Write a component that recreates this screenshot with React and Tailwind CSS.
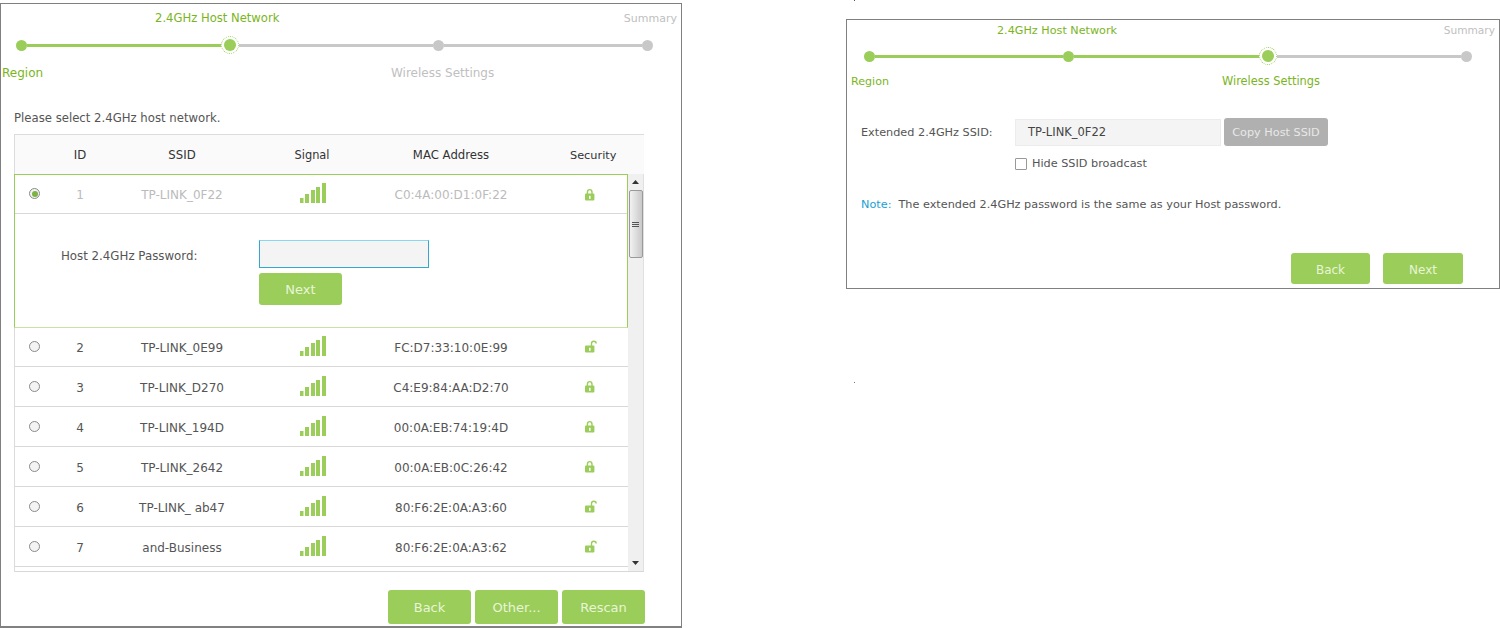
import React from 'react';

const GREEN = '#9acd5a';

const NETWORKS = [
  { id: 2, ssid: 'TP-LINK_0E99', mac: 'FC:D7:33:10:0E:99', open: true },
  { id: 3, ssid: 'TP-LINK_D270', mac: 'C4:E9:84:AA:D2:70', open: false },
  { id: 4, ssid: 'TP-LINK_194D', mac: '00:0A:EB:74:19:4D', open: false },
  { id: 5, ssid: 'TP-LINK_2642', mac: '00:0A:EB:0C:26:42', open: false },
  { id: 6, ssid: 'TP-LINK_ ab47', mac: '80:F6:2E:0A:A3:60', open: true },
  { id: 7, ssid: 'and-Business', mac: '80:F6:2E:0A:A3:62', open: true },
];

const COLS = 'grid grid-cols-[40px_50px_154px_106px_172px_91px] items-center';
const CELL = 'text-center pt-[2px]';

const SignalBars = () => (
  <svg width="27" height="20" viewBox="0 0 27 20" className="block">
    <rect x="0" y="15" width="3.5" height="5" fill={GREEN} />
    <rect x="5" y="11" width="4" height="9" fill={GREEN} />
    <rect x="11" y="7" width="4" height="13" fill={GREEN} />
    <rect x="16" y="4" width="4" height="16" fill={GREEN} />
    <rect x="22" y="0" width="4" height="20" fill={GREEN} />
  </svg>
);

const Lock = ({ open }) => (
  <svg width="13" height="13" viewBox="0 0 13 13" className="block">
    {open ? (
      <path d="M6.5 6V3.6C6.5 2.2 7.4 1.2 8.8 1.2S11.2 2.2 11.2 3.6" fill="none" stroke={GREEN} strokeWidth="1.4" />
    ) : (
      <path d="M2.4 6V4.2C2.4 2.6 3.2 1.6 4.7 1.6S7 2.6 7 4.2V6" fill="none" stroke={GREEN} strokeWidth="1.4" />
    )}
    <rect x={0} y="5.5" width="9.4" height="7" rx="1" fill={GREEN} />
    <rect x="4" y="7.8" width="1.6" height="3" fill="#fff" />
  </svg>
);

const Radio = ({ checked }) => (
  <span className="flex w-[11px] h-[11px] mb-[1px] mr-[1px] items-center justify-center rounded-full border border-[#8a8a8a] bg-[#f4f4f4]">
    {checked && <span className="block w-[6px] h-[6px] rounded-full bg-[#7cb342]" />}
  </span>
);

const Btn = ({ className, children }) => (
  <button className={`flex items-center justify-center pt-[2px] rounded-[3px] bg-[#9acd5a] text-[#e9f5d8] ${className}`}>
    {children}
  </button>
);

const Dot = ({ state }) => {
  if (state === 'active') {
    return (
      <span className="flex w-[18px] h-[18px] shrink-0 items-center justify-center rounded-full border border-dotted border-[#9acd5a]">
        <span className="block w-[12px] h-[12px] rounded-full bg-[#9acd5a]" />
      </span>
    );
  }
  return <span className={`block w-[11px] h-[11px] shrink-0 rounded-full ${state === 'done' ? 'bg-[#9acd5a]' : 'bg-[#c8c8c8]'}`} />;
};

const Line = ({ done, className }) => <span className={`block h-[3px] ${done ? 'bg-[#9acd5a]' : 'bg-[#c8c8c8]'} ${className}`} />;

const ScrollArrow = ({ down }) => (
  <svg width="7" height="4" viewBox="0 0 7 4" className="block">
    <polygon points={down ? '0,0 7,0 3.5,4' : '3.5,0 7,4 0,4'} fill="#333" />
  </svg>
);

const Scrollbar = () => (
  <div className="flex flex-col items-center w-[16px] h-full bg-[#f0f0f0] border-r border-[#e0e0e0]">
    <div className="flex h-[16px] shrink-0 items-center justify-center"><ScrollArrow /></div>
    <div className="flex flex-col gap-[1px] items-center justify-center w-[14px] h-[68px] rounded-[2px] border border-[#9a9a9a] bg-gradient-to-r from-[#f2f2f2] to-[#c9c9c9]">
      <span className="block w-[7px] h-[1px] bg-[#555]" />
      <span className="block w-[7px] h-[1px] bg-[#555]" />
      <span className="block w-[7px] h-[1px] bg-[#555]" />
    </div>
    <div className="flex-1" />
    <div className="flex h-[16px] shrink-0 items-center justify-center"><ScrollArrow down /></div>
  </div>
);

const NetworkRow = ({ n }) => (
  <div className={`${COLS} h-[40px] border-b border-[#d8d8d8] text-[#555]`}>
    <div className="flex justify-center"><Radio /></div>
    <div className={CELL}>{n.id}</div>
    <div className={CELL}>{n.ssid}</div>
    <div className="flex justify-center pl-[2px] mb-[2px]"><SignalBars /></div>
    <div className={CELL}>{n.mac}</div>
    <div className="flex pl-[48px]"><Lock open={n.open} /></div>
  </div>
);

const HostNetworkPanel = () => (
  <div className="flex flex-col w-[682px] h-[625px] mt-[3px] shrink-0 border border-[#808080] border-b-2">
    {/* stepper */}
    <div className="flex justify-between h-[24px] items-center pl-[154px] pr-[4px] pt-[6px]">
      <span className="text-[11.6px] text-[#7ab51d]">2.4GHz Host Network</span>
      <span className="text-[11px] text-[#c0c0c0]">Summary</span>
    </div>
    <div className="flex items-center h-[34px] pl-[15px] pr-[28px]">
      <Dot state="done" />
      <Line done className="w-[194px]" />
      <Dot state="active" />
      <Line className="w-[194px]" />
      <Dot />
      <Line className="flex-1" />
      <Dot />
    </div>
    <div className="flex h-[20px] items-center pl-[1px] pt-[2px] text-[12px]">
      <span className="w-[389px] text-[#7ab51d]">Region</span>
      <span className="text-[#c0c0c0]">Wireless Settings</span>
    </div>

    <p className="mt-[28px] pl-[13px] text-[11.7px] leading-[16px] text-[#555]">Please select 2.4GHz host network.</p>

    {/* network table */}
    <div className="flex flex-col w-[630px] h-[438px] mt-[8px] ml-[13px] border-t border-l border-[#dcdcdc] text-[12px]">
      <div className={`${COLS} h-[39px] shrink-0 bg-[#fafafa] text-[#333] text-[11.7px]`}>
        <div />
        <div className="text-center pt-[3px]">ID</div>
        <div className="text-center pt-[3px]">SSID</div>
        <div className="text-center pt-[3px] text-[11.4px]">Signal</div>
        <div className="text-center pt-[3px]">MAC Address</div>
        <div className="pl-[33px] pt-[3px] text-[11.3px]">Security</div>
      </div>
      <div className="flex flex-1 min-h-0">
        <div className="flex-1 min-w-0">
          <div className="-ml-[1px] border border-[#9acd5a] border-b-[#c6e3a0]">
            <div className={`${COLS} h-[39px] border-b border-[#d8d8d8] text-[#bbb]`}>
              <div className="flex justify-center"><Radio checked /></div>
              <div className={CELL}>1</div>
              <div className={CELL}>TP-LINK_0F22</div>
              <div className="flex justify-center pl-[2px] mb-[2px]"><SignalBars /></div>
              <div className={CELL}>C0:4A:00:D1:0F:22</div>
              <div className="flex pl-[48px]"><Lock /></div>
            </div>
            <div className="flex h-[113px] pl-[46px] pt-[26px]">
              <span className="w-[198px] h-[28px] flex items-center pt-[6px] text-[11.8px] text-[#555]">Host 2.4GHz Password:</span>
              <div className="flex flex-col gap-[5px]">
                <input className="w-[170px] h-[28px] bg-[#f4f4f4] border border-[#35a7cf] border-t-[#85d8f0]" />
                <Btn className="w-[83px] h-[32px] text-[13px]">Next</Btn>
              </div>
            </div>
          </div>
          <div className="-mt-[1px]">
            {NETWORKS.map(n => <NetworkRow key={n.id} n={n} />)}
          </div>
        </div>
        <Scrollbar />
      </div>
      <div className="shrink-0 border-b border-[#d8d8d8]" />
    </div>

    <div className="flex justify-end gap-[4px] mt-[18px] pr-[36px]">
      <Btn className="w-[83px] h-[34px] text-[13px]">Back</Btn>
      <Btn className="w-[83px] h-[34px] text-[13px]">Other...</Btn>
      <Btn className="w-[83px] h-[34px] text-[13px]">Rescan</Btn>
    </div>
  </div>
);

const ExtendedPanel = () => (
  <div className="flex flex-col w-[654px] h-[270px] mt-[19px] ml-[164px] shrink-0 border border-[#808080]">
    <div className="flex justify-between h-[20px] items-center pl-[150px] pr-[4px] pt-[2px]">
      <span className="text-[11.2px] text-[#7ab51d]">2.4GHz Host Network</span>
      <span className="text-[10.6px] text-[#c0c0c0]">Summary</span>
    </div>
    <div className="flex items-center h-[32px] pl-[17px] pr-[27px]">
      <Dot state="done" />
      <Line done className="w-[188px]" />
      <Dot state="done" />
      <Line done className="w-[185px]" />
      <Dot state="active" />
      <Line className="flex-1" />
      <Dot />
    </div>
    <div className="flex h-[18px] items-center pl-[4px] pt-[2px]">
      <span className="w-[371px] text-[11.1px] text-[#7ab51d]">Region</span>
      <span className="text-[11.4px] text-[#7ab51d]">Wireless Settings</span>
    </div>

    <div className="flex items-center h-[28px] mt-[28px] pl-[14px] text-[11.25px] text-[#555]">
      <span className="w-[154px] pt-[2px]">Extended 2.4GHz SSID:</span>
      <div className="flex items-center w-[206px] h-[27px] mt-[1px] pl-[12px] pt-[1px] bg-[#f4f4f4] border border-[#ececec] text-[11.5px] text-[#444]">TP-LINK_0F22</div>
      <button className="flex items-center justify-center w-[104px] h-[28px] ml-[3px] pt-[2px] rounded-[3px] bg-[#b0b0b0] text-[#e8e8e8]">Copy Host SSID</button>
    </div>
    <label className="flex items-center gap-[5px] h-[16px] mt-[10px] pl-[168px] text-[11.25px] text-[#555]">
      <span className="block w-[12px] h-[12px] rounded-[1px] border border-[#999] bg-white" />
      Hide SSID broadcast
    </label>
    <p className="mt-[25px] pl-[14px] text-[11.25px] leading-[16px] text-[#555]">
      <span className="text-[#1a9fd4] mr-[7px]">Note:</span>
      The extended 2.4GHz password is the same as your Host password.
    </p>
    <div className="flex justify-end gap-[13px] mt-[40px] pr-[36px]">
      <Btn className="w-[79px] h-[31px] text-[12px]">Back</Btn>
      <Btn className="w-[80px] h-[31px] text-[12px]">Next</Btn>
    </div>
  </div>
);

export default function App() {
  return (
    <div className="relative flex items-start w-[1500px] h-[628px] overflow-hidden bg-white font-['DejaVu_Sans',sans-serif]">
      <HostNetworkPanel />
      <ExtendedPanel />
      {/* stray scan specks */}
      <span className="absolute left-[854px] top-0 w-[1px] h-[1px] bg-[#555]" />
      <span className="absolute left-[854px] top-[382px] w-[1px] h-[1px] bg-[#777]" />
    </div>
  );
}
